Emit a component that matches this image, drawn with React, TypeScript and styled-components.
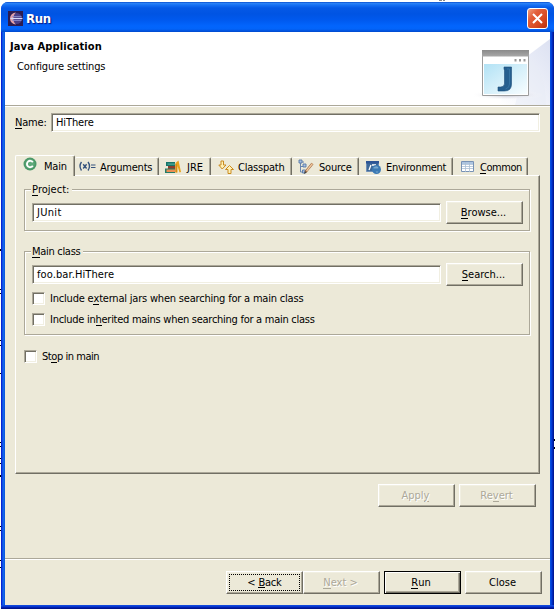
import React from 'react';
import styled, { createGlobalStyle, css } from 'styled-components';

const GlobalStyle = createGlobalStyle`
  * { box-sizing: border-box; }
  html, body { margin: 0; padding: 0; overflow: hidden; background: #fff; }
  body { font: 11px/13px "DejaVu Sans Condensed", "DejaVu Sans", sans-serif; font-stretch: condensed; color: #000; }
  u { text-decoration: none; box-shadow: 0 1px 0 currentColor; display: inline-block; height: 12px; }
`;

const Desktop = styled.div`
  position: relative;
  width: 555px;
  height: 609px;
  padding: 2px 1px 0 1px;
`;
const DesktopMarks = styled.svg`
  position: absolute;
  inset: 0;
`;
const Window = styled.div`
  position: relative;
  width: 553px;
  height: 607px;
  display: flex;
  flex-direction: column;
  border-radius: 7px 7px 0 0;
  padding: 0 4px 4px;
  background: linear-gradient(90deg, #0019cf 0, #0831d9 1px, #166aee 2px, #0855dd 4px, #0855dd 549px, #0046e0 550px, #0032d0 551px, #001ea0 552px, #00138c 553px);
`;
const BottomEdge = styled.div`
  position: absolute;
  left: 0;
  right: 0;
  bottom: 0;
  height: 4px;
  background: linear-gradient(#1048dc 0 1px, #0838d0 1px 2px, #0020b0 2px 3px, #00138c 3px);
`;
const TitleBar = styled.div`
  height: 30px;
  flex: none;
  margin: 0 -4px;
  padding: 2px 6px 0 7px;
  display: flex;
  align-items: center;
  border-radius: 7px 7px 0 0;
  background: linear-gradient(#0a4fd0 0, #2a80f5 1.5px, #1670f4 3px, #0558e6 6px, #0054e3 12px, #0059ee 18px, #0265fd 24px, #0264fa 27px, #0048cc 30px);
`;
const Title = styled.h1`
  margin: 2px auto 0 3px;
  font: bold 13px/18px "DejaVu Sans Condensed", "DejaVu Sans", sans-serif;
  font-stretch: condensed;
  letter-spacing: -0.3px;
  color: #fff;
  text-shadow: 1px 1px 1px #0a1883;
`;
const CloseBox = styled.button`
  width: 21px;
  height: 21px;
  padding: 0;
  display: grid;
  place-items: center;
  border: 1px solid #fff;
  border-radius: 3px;
  background: linear-gradient(135deg, #f0a080 0, #e3603c 30%, #d84a22 65%, #b83010 100%);
`;
const Header = styled.header`
  height: 73px;
  flex: none;
  display: flex;
  justify-content: space-between;
  background: #fff;
`;
const HeaderText = styled.div`
  padding: 8px 0 0 5px;
`;
const Heading = styled.h2`
  margin: 0 0 7px;
  font-size: 11px;
  line-height: 13px;
  font-weight: bold;
  letter-spacing: 0.12px;
`;
const Sub = styled.p`
  margin: 0 0 0 7px;
  letter-spacing: -0.12px;
`;
const Text = styled.span<{ $ls?: number }>`
  white-space: pre;
  letter-spacing: ${p => p.$ls ?? 0}px;
`;
const Body = styled.main`
  flex: 1;
  background: #ece9d8;
  border-top: 1px solid #aca899;
  box-shadow: inset 0 1px #fff;
  padding: 7px 0 0 10px;
`;
const NameRow = styled.label`
  display: flex;
  align-items: center;
  height: 19px;
  > span { width: 36px; }
`;
const Field = styled.div<{ $w: number }>`
  width: ${p => p.$w}px;
  height: 19px;
  flex: none;
  padding: 2px 4px;
  background: #fff;
  border: 1px solid;
  border-color: #aca899 #fff #fff #aca899;
  box-shadow: inset 1px 1px #716f64, inset -1px -1px #f1efe2;
`;
const Tabs = styled.nav`
  position: relative;
  z-index: 1;
  display: flex;
  align-items: flex-end;
  height: 20px;
  margin-top: 23px;
`;
const Tab = styled.div<{ $w: number; $pad?: number; $gap?: number; $active?: boolean }>`
  width: ${p => p.$w}px;
  height: 18px;
  flex: none;
  display: flex;
  align-items: center;
  gap: ${p => p.$gap ?? 5}px;
  padding: 1px 0 0 ${p => p.$pad ?? 4}px;
  border-top: 1px solid #fff;
  border-right: 1px solid #716f64;
  border-radius: 2px 2px 0 0;
  box-shadow: inset -1px 0 #aca899;
  svg { flex: none; }
  ${p => p.$active && css`
    height: 21px;
    margin-bottom: -1px;
    background: #ece9d8;
    border-left: 1px solid #fff;
    padding: 0 0 2px 7px;
    span { margin-top: 2px; }
    svg { margin-top: -3px; }
  `}
`;
const Panel = styled.section`
  width: 525px;
  height: 299px;
  padding: 7px 8px;
  border: 1px solid;
  border-color: #fff #716f64 #716f64 #fff;
  box-shadow: inset -1px -1px #aca899;
`;
const Group = styled.fieldset<{ $h: number; $gap?: number }>`
  position: relative;
  width: 506px;
  height: ${p => p.$h}px;
  margin: ${p => p.$gap ?? 0}px 0 0;
  padding: 0 0 0 7px;
  border: 0;
  &::before {
    content: '';
    position: absolute;
    inset: 6px 0 0 0;
    border: 1px solid #aca899;
    box-shadow: 1px 1px #fff, inset 1px 1px #fff;
  }
  > * { position: relative; }
`;
const Legend = styled.div`
  width: max-content;
  height: 13px;
  padding: 0 3px 0 1px;
  background: #ece9d8;
`;
const FieldRow = styled.div`
  display: flex;
  align-items: center;
  gap: 5px;
  height: 23px;
  margin: 5px 0 0 1px;
`;
const Button = styled.button<{ $primary?: boolean }>`
  width: 77px;
  height: 23px;
  flex: none;
  padding: 0 2px 0 0;
  font: inherit;
  color: #000;
  background: #ece9d8;
  border: 1px solid;
  border-color: #fff #716f64 #716f64 #fff;
  box-shadow: inset -1px -1px #aca899, inset 1px 1px #f1efe2;
  &:disabled { color: #aca899; text-shadow: 1px 1px #fff; }
  ${p => p.$primary && css`
    padding-right: 3px;
    border-color: #000;
    box-shadow: inset 1px 1px #fff, inset -1px -1px #716f64, inset -2px -2px #aca899;
  `}
`;
const FocusRing = styled.span`
  display: block;
  margin: 2px 0 2px 2px;
  height: 17px;
  line-height: 15px;
  letter-spacing: -0.2px;
  border: 1px dotted #000;
`;
const Check = styled.label<{ $top: number; $left: number }>`
  display: flex;
  align-items: center;
  height: 13px;
  gap: 5px;
  margin: ${p => p.$top}px 0 0 ${p => p.$left}px;
`;
const Box = styled.i`
  width: 13px;
  height: 13px;
  background: #fff;
  border: 1px solid;
  border-color: #aca899 #fff #fff #aca899;
  box-shadow: inset 1px 1px #716f64, inset -1px -1px #f1efe2;
`;
const Actions = styled.div`
  display: flex;
  justify-content: flex-end;
  gap: 4px;
  margin: 10px 14px 0 0;
`;
const Footer = styled.footer`
  display: flex;
  justify-content: flex-end;
  margin: 51px 0 0 -10px;
  padding: 12px 8px 0 0;
  border-top: 1px solid #aca899;
  box-shadow: inset 0 1px #fff;
  ${Button} + ${Button} ~ ${Button} { margin-left: 4px; }
`;

const EclipseIcon = () => (
  <svg width="15" height="15" viewBox="0 0 15 15">
    <rect width="15" height="15" fill="#2c1c50" />
    <circle cx="8.5" cy="7.5" r="5.5" fill="#4a3f86" />
    <path d="M8 1.500a6 6 0 0 0 0 12C4.500 11 4.500 4 8 1.500z" fill="#e0a0a8" />
    <path d="M2.500 7.500h12" stroke="#d5d8f8" strokeWidth="1.200" />
    <path d="M4 5.500h9.500M4 9.500h9.500" stroke="#8f90d0" strokeWidth=".8" />
  </svg>
);
const Banner = () => (
  <svg width="85" height="73" viewBox="465 32 85 73">
    <defs>
      <linearGradient id="sky" x2="1" y2="1"><stop stopColor="#b2e2f5" /><stop offset="1" stopColor="#f8fdff" /></linearGradient>
      <linearGradient id="beam" x1="1" x2="0" y1="0" y2="1"><stop stopColor="#dce1f2" /><stop offset="1" stopColor="#fff" /></linearGradient>
      <linearGradient id="bar" x2="0" y2="1"><stop stopColor="#8a8a8a" /><stop offset="1" stopColor="#a8a8a8" /></linearGradient>
      <radialGradient id="shade"><stop stopColor="#b8b8c8" /><stop offset="1" stopColor="#fff" stopOpacity="0" /></radialGradient>
    </defs>
    <path d="M550 39L526 57L498 105H550z" fill="url(#beam)" />
    <path d="M528 56Q545 70 546 105H515z" fill="#e8ebf6" opacity=".5" />
    <ellipse cx="507" cy="95" rx="36" ry="5" fill="url(#shade)" />
    <path d="M482.500 50.500h46v45h-46z" fill="#fff" stroke="#9c9c9c" />
    <path d="M482 50h47v6.500h-47z" fill="url(#bar)" />
    <path d="M484 64h43v30h-43z" fill="url(#sky)" />
    <path d="M514.500 59h2v2.500h-2zM519 59h2v2.500h-2zM523.500 59h2v2.500h-2z" fill="#999" />
    <path d="M504 67h7.500v17q0 7-7 7h-6.500v-4h2.500q3.500 0 4-3V69.500h-.5z" fill="#255f8f" stroke="#1c4e79" strokeWidth=".6" />
    <path d="M507 69h2.500v15q0 4-4 5" fill="none" stroke="#3673a2" />
  </svg>
);
const MainIcon = () => (
  <svg width="14" height="14" viewBox="0 0 14 14">
    <circle cx="7" cy="7" r="6.500" fill="#4b9868" />
    <circle cx="7" cy="7" r="4.700" fill="#5fa87a" />
    <path d="M9.800 5.200A3.200 3.200 0 1 0 9.800 8.800" fill="none" stroke="#fff" strokeWidth="1.900" />
  </svg>
);
const ArgsIcon = () => (
  <svg width="17" height="12" viewBox="0 0 17 12" fill="none" stroke="#37547e" strokeWidth="1.400">
    <path d="M2.500 1Q-.5 5 2.500 9.500M9 1Q12 5 9 9.500M4.200 3.200l3.400 4.300M7.600 3.200L4.200 7.500" />
    <path d="M12 4h4.500M12 6.500h4.500" strokeWidth="1.200" />
  </svg>
);
const JreIcon = () => (
  <svg width="16" height="14" viewBox="0 0 16 14">
    <path d="M1 2h9v4H1z" fill="#17756a" /><path d="M2.500 3.300H10V5H2.500z" fill="#3f9d8e" />
    <path d="M3 6h7v3H3z" fill="#8e3e2c" /><path d="M0 8.500h10V13H0z" fill="#247d68" /><path d="M1.500 9.500H10v2.500H1.500z" fill="#ec8f54" />
    <path d="M10.500 3l3-2.500L16 12l-1.500.5L12.500 6v6.500h-2z" fill="#e9a21c" /><path d="M11 4v8.500" stroke="#c8760c" />
  </svg>
);
const ClasspathIcon = () => (
  <svg width="17" height="15" viewBox="0 0 17 15" fill="#fff1b5" stroke="#ca8b20" strokeWidth="1">
    <path d="M3 1h2.500v4H8L4.200 9 .8 5H3z" /><path d="M10 13.500V9.500H7.500L11.500 5.500l4 4H13v4z" />
  </svg>
);
const SourceIcon = () => (
  <svg width="16" height="16" viewBox="0 0 16 16">
    <path d="M2.500 3v10H6M3 7.500h3M3 3h3" fill="none" stroke="#6b86ae" />
    <path d="M1 1h3v3H1zM5 5h3v3H5zM4.500 11h3v3h-3z" fill="#a9c0e0" stroke="#5878a8" strokeWidth=".9" />
    <path d="M14.500 4.500L7.500 13" stroke="#9c6a42" strokeWidth="2.600" /><path d="M14.500 4.500L8.500 12" stroke="#f2c9a0" strokeWidth="1.300" />
    <path d="M6 15l.7-3 2 1.500z" fill="#444" />
  </svg>
);
const EnvIcon = () => (
  <svg width="16" height="15" viewBox="0 0 16 15">
    <path d="M.5 1.500h12v10H.5z" fill="#3d6898" stroke="#6f8fb8" /><path d="M0 1h13v2.500H0z" fill="#2d5596" />
    <path d="M3 10l2-5M6 5h4" stroke="#fff" strokeWidth="1.300" />
    <circle cx="10.500" cy="9.500" r="4.500" fill="#3b79b4" /><path d="M7 8q3-3 5-1t-4 1.500zM9.500 11.500h3l-1.500 1.500z" fill="#78a8cc" />
  </svg>
);
const CommonIcon = () => (
  <svg width="14" height="12" viewBox="0 0 14 12">
    <path d="M.5.5h12v10H.5z" fill="#fff" stroke="#7892b5" /><path d="M1 1h11v2H1z" fill="#adc5e0" />
    <path d="M1 3.500h11M1 5.500h11M1 7.500h11M4.500 1v10M8.500 1v10" stroke="#a9bfd4" strokeWidth=".8" />
  </svg>
);

export default function App() {
  return (
    <>
      <GlobalStyle />
      <Desktop>
        <DesktopMarks width="555" height="609">
          <path d="M439 0h3v1h-3zM443 0h2v1h-2z" fill="#888" />
          <path d="M0 249h1v2H0zM0 289h1v1H0zM0 293h1v1H0zM0 340h1v1H0zM0 345h1v1H0zM0 373h1v1H0zM0 442h1v1H0zM0 446h1v1H0zM0 458h1v1H0zM0 463h1v1H0zM0 475h1v2H0zM0 526h1v1H0zM0 530h1v1H0zM0 560h1v1H0zM0 567h1v1H0zM554 439h1v2h-1zM554 447h1v2h-1z" />
        </DesktopMarks>
        <Window>
          <BottomEdge />
          <TitleBar>
            <EclipseIcon />
            <Title>Run</Title>
            <CloseBox aria-label="Close window">
              <svg width="13" height="13" viewBox="0 0 13 13"><path d="M2 2l9 9M11 2l-9 9" stroke="#fff" strokeWidth="2" /></svg>
            </CloseBox>
          </TitleBar>
          <Header>
            <HeaderText>
              <Heading>Java Application</Heading>
              <Sub>Configure settings</Sub>
            </HeaderText>
            <Banner />
          </Header>
          <Body>
            <NameRow><Text $ls={-0.2}><u>N</u>ame:</Text><Field $w={489}><Text $ls={-0.1}>HiThere</Text></Field></NameRow>
            <Tabs>
              <Tab $w={60} $gap={7} $active><MainIcon /><Text $ls={-0.2}>Main</Text></Tab>
              <Tab $w={84} $gap={4}><ArgsIcon /><Text $ls={-0.22}>Arguments</Text></Tab>
              <Tab $w={52} $pad={6} $gap={6}><JreIcon /><Text>JRE</Text></Tab>
              <Tab $w={81} $pad={7} $gap={3}><ClasspathIcon /><Text $ls={-0.22}>Classpath</Text></Tab>
              <Tab $w={67} $pad={6} $gap={5}><SourceIcon /><Text $ls={-0.22}>Source</Text></Tab>
              <Tab $w={94} $pad={7} $gap={4}><EnvIcon /><Text $ls={-0.27}>Environment</Text></Tab>
              <Tab $w={75} $pad={8} $gap={5}><CommonIcon /><Text $ls={-0.45}><u>C</u>ommon</Text></Tab>
            </Tabs>
            <Panel>
              <Group $h={48}>
                <Legend><Text><u>P</u>roject:</Text></Legend>
                <FieldRow><Field $w={409}><Text $ls={0.3}>JUnit</Text></Field><Button><u>B</u>rowse...</Button></FieldRow>
              </Group>
              <Group $h={90} $gap={14}>
                <Legend><Text $ls={-0.3}><u>M</u>ain class</Text></Legend>
                <FieldRow><Field $w={409}><Text $ls={0.1}>foo.bar.HiThere</Text></Field><Button><u>S</u>earch...</Button></FieldRow>
                <Check $top={6} $left={1}><Box /><Text $ls={-0.2}>Include e<u>x</u>ternal jars when searching for a main class</Text></Check>
                <Check $top={8} $left={1}><Box /><Text $ls={-0.27}>Include in<u>h</u>erited mains when searching for a main class</Text></Check>
              </Group>
              <Check $top={15} $left={0}><Box /><Text $ls={-0.45}>St<u>o</u>p in main</Text></Check>
            </Panel>
            <Actions>
              <Button disabled>Appl<u>y</u></Button>
              <Button disabled>Re<u>v</u>ert</Button>
            </Actions>
            <Footer>
              <Button><FocusRing>&lt; <u>B</u>ack</FocusRing></Button>
              <Button disabled><u>N</u>ext &gt;</Button>
              <Button $primary><u>R</u>un</Button>
              <Button>Close</Button>
            </Footer>
          </Body>
        </Window>
      </Desktop>
    </>
  );
}
